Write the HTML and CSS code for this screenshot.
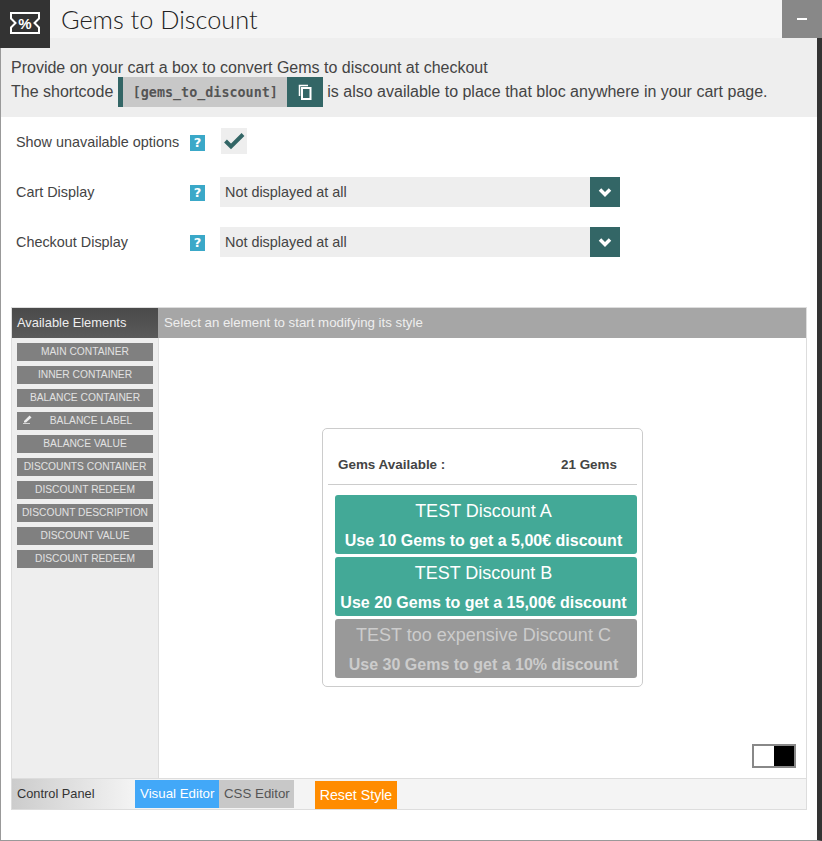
FILE: index.html
```html
<!DOCTYPE html>
<html lang="en">
<head>
<meta charset="utf-8">
<title>Gems to Discount</title>
<link rel="stylesheet" href="styles.css">
</head>
<body>
<header class="topbar">
  <div class="logo">
    <svg width="32" height="24" viewBox="0 0 32 24"><path class="ticket" d="M2 2H30V7.500L25.500 12L30 16.500V22H2V16.500L6.500 12L2 7.500Z"/><text class="pct" x="16" y="17.500">%</text></svg>
  </div>
  <h1 class="title">Gems to Discount</h1>
  <button class="collapse"><span class="minus"></span></button>
</header>
<main class="panel">
  <section class="intro">
    <p class="intro-line">Provide on your cart a box to convert Gems to discount at checkout</p>
    <div class="intro-line shortline">
      <span>The shortcode</span>
      <span class="shortcode"><code class="code">[gems_to_discount]</code><span class="copy"><svg width="16" height="16" viewBox="0 0 16 16"><path class="copy-back" d="M11 1.500H2.500V12"/><rect class="copy-front" x="5" y="4" width="8.500" height="11"/></svg></span></span>
      <span>is also available to place that bloc anywhere in your cart page.</span>
    </div>
  </section>
  <section class="options">
    <div class="opt opt-check">
      <label class="opt-label">Show unavailable options</label>
      <span class="help">?</span>
      <span class="checkbox"><svg width="22" height="18" viewBox="0 0 22 18"><path class="tick" d="M2.500 9L8 14.500L20 2.500"/></svg></span>
    </div>
    <div class="opt">
      <label class="opt-label">Cart Display</label>
      <span class="help">?</span>
      <div class="select"><span class="select-value">Not displayed at all</span><span class="select-btn"><svg width="14" height="10" viewBox="0 0 14 10"><path class="chev" d="M2 2.500L7 7.500L12 2.500"/></svg></span></div>
    </div>
    <div class="opt">
      <label class="opt-label">Checkout Display</label>
      <span class="help">?</span>
      <div class="select"><span class="select-value">Not displayed at all</span><span class="select-btn"><svg width="14" height="10" viewBox="0 0 14 10"><path class="chev" d="M2 2.500L7 7.500L12 2.500"/></svg></span></div>
    </div>
  </section>
  <section class="editor">
    <div class="ed-head">
      <div class="ed-title">Available Elements</div>
      <div class="ed-hint">Select an element to start modifying its style</div>
    </div>
    <div class="ed-body">
      <aside class="side">
        <button class="el">MAIN CONTAINER</button>
        <button class="el">INNER CONTAINER</button>
        <button class="el">BALANCE CONTAINER</button>
        <button class="el el-active"><svg class="pencil" width="11" height="10" viewBox="0 0 11 10"><path d="M1 7L6.500 1.500L8.500 3.500L3 8.500H1ZM0 9.200H7V10H0Z"/></svg>BALANCE LABEL</button>
        <button class="el">BALANCE VALUE</button>
        <button class="el">DISCOUNTS CONTAINER</button>
        <button class="el">DISCOUNT REDEEM</button>
        <button class="el">DISCOUNT DESCRIPTION</button>
        <button class="el">DISCOUNT VALUE</button>
        <button class="el">DISCOUNT REDEEM</button>
      </aside>
      <div class="canvas">
        <div class="widget">
          <div class="balance"><span>Gems Available :</span><span>21 Gems</span></div>
          <div class="discounts">
            <div class="disc"><div class="disc-name">TEST Discount A</div><div class="disc-desc">Use 10 Gems to get a 5,00€ discount</div></div>
            <div class="disc"><div class="disc-name">TEST Discount B</div><div class="disc-desc">Use 20 Gems to get a 15,00€ discount</div></div>
            <div class="disc disc-off"><div class="disc-name">TEST too expensive Discount C</div><div class="disc-desc">Use 30 Gems to get a 10% discount</div></div>
          </div>
        </div>
        <div class="toggle"><span class="t-white"></span><span class="t-black"></span></div>
      </div>
    </div>
    <div class="ed-foot">
      <div class="cp">Control Panel</div>
      <div class="tab tab-on">Visual Editor</div>
      <div class="tab tab-css">CSS Editor</div>
      <button class="reset">Reset Style</button>
    </div>
  </section>
</main>
</body>
</html>
```
FILE: styles.css
```css
* { box-sizing: border-box; }
html, body { margin: 0; padding: 0; }
body {
  width: 822px;
  height: 841px;
  overflow: hidden;
  background: #fff;
  font-family: "Liberation Sans", Arial, sans-serif;
  color: #444;
}
button { font-family: inherit; border: 0; padding: 0; margin: 0; }

.topbar { display: flex; height: 38px; background: #f4f4f4; }
.logo {
  width: 50px; height: 48px; flex: none;
  background: #333; position: relative; z-index: 2;
  display: flex; align-items: center; justify-content: center;
  padding-bottom: 2px;
}
.ticket { fill: none; stroke: #fff; stroke-width: 2; }
.pct { fill: #fff; font: bold 15px "Liberation Sans", sans-serif; text-anchor: middle; }
.title {
  margin: 0 0 0 11px; flex: 1;
  font: 300 25.300px/38px Lato, sans-serif; color: #222;
}
.collapse {
  width: 40px; height: 38px; background: #888;
  display: flex; align-items: center; justify-content: center;
}
.minus { width: 10px; height: 2px; background: #fff; }

.panel {
  height: 803px;
  border-left: 1px solid #999;
  border-right: 5px solid #333;
  border-bottom: 1px solid #999;
}
.intro { height: 79px; background: #eee; padding: 18px 10px 0; font-size: 16px; }
.intro-line { margin: 0; height: 24px; line-height: 23px; }
.shortline { display: flex; align-items: center; gap: 5px; line-height: 24px; }
.shortcode {
  display: flex; height: 30px; width: 205px; flex: none;
  border-left: 5px solid #366;
  background: #c8c8c8;
  margin-right: -1px;
}
.code {
  flex: 1; text-align: center;
  font: 600 13.400px/31px "DejaVu Sans Mono", monospace; color: #555;
}
.copy {
  width: 36px; background: #366;
  display: flex; align-items: center; justify-content: center;
}
.copy-back { fill: none; stroke: #fff; stroke-width: 1.500; }
.copy-front { fill: none; stroke: #fff; stroke-width: 2; }

.options { padding: 11px 0 0 15px; height: 190px; }
.opt { display: flex; align-items: center; height: 30px; margin-bottom: 20px; }
.opt-check { height: 26px; margin-bottom: 23px; }
.opt-label { width: 174px; font-size: 14.400px; flex: none; }
.opt-check .opt-label { margin-top: 2px; }
.help {
  width: 15px; height: 16px; flex: none; background: #3aa8c8; color: #fff;
  font: bold 13px/16px "DejaVu Sans", sans-serif; text-align: center;
  margin-top: 2px;
}
.opt-check .help { margin-top: 4px; }
.checkbox {
  margin-left: 16px; width: 26px; height: 26px; background: #eee;
  display: flex; align-items: center; justify-content: center;
}
.tick { fill: none; stroke: #366; stroke-width: 4; }
.select {
  margin-left: 15px; width: 400px; height: 30px; background: #eee;
  display: flex; font-size: 14.400px; line-height: 30px;
}
.select-value { flex: 1; padding-left: 5px; }
.select-btn {
  width: 30px; background: #366;
  display: flex; align-items: center; justify-content: center;
}
.chev { fill: none; stroke: #fff; stroke-width: 3.500; }

.editor {
  margin-left: 10px; width: 796px; height: 503px;
  border: 1px solid #ddd;
  display: flex; flex-direction: column;
}
.ed-head { display: flex; height: 30px; flex: none; line-height: 29px; }
.ed-title {
  width: 146px; padding-left: 5px; color: #eee; font-size: 12.900px;
  background: linear-gradient(to bottom, #4a4a4a, #5a5a5a);
}
.ed-hint { flex: 1; padding-left: 6px; background: #a6a6a6; color: #eee; font-size: 13.280px; line-height: 29px; }
.ed-body { display: flex; flex: 1; min-height: 0; }
.side {
  width: 147px; flex: none; background: #eee;
  border-right: 1px solid #ddd;
  padding: 5px 5px 0;
  display: flex; flex-direction: column; gap: 5px;
}
.el {
  height: 18px; width: 136px; background: #808080; color: #e2e2e2;
  font-size: 10.240px; line-height: 18px; text-align: center; position: relative;
}
.el-active { padding-left: 12px; }
.pencil { position: absolute; left: 6px; top: 2px; fill: #eee; }
.canvas { flex: 1; position: relative; padding: 90px 0 0 163px; }
.widget {
  width: 321px; height: 259px;
  border: 1px solid #ccc; border-radius: 5px;
  padding: 0 5px;
}
.balance {
  height: 56px; margin-bottom: 10px;
  border-bottom: 1px solid #ccc;
  display: flex; justify-content: space-between;
  padding: 27px 20px 0 10px;
  font-size: 13.440px; line-height: 17px; font-weight: bold; color: #444;
}
.discounts { padding-left: 7px; display: flex; flex-direction: column; gap: 3px; }
.disc {
  height: 59px; background: #43a997; border-radius: 3px; color: #fff;
  text-align: center; padding-right: 5px;
}
.disc-name { font-size: 18px; line-height: 20px; padding-top: 6px; height: 30px; }
.disc-desc { font-size: 16px; font-weight: bold; line-height: 20px; padding-top: 6px; white-space: nowrap; }
.disc-off { background: #999; color: #ccc; }
.toggle {
  position: absolute; right: 10px; bottom: 10px;
  width: 44px; height: 24px; border: 2px solid #888; display: flex;
}
.t-white { flex: 1; background: #fff; }
.t-black { flex: 1; background: #000; }

.ed-foot {
  height: 31px; flex: none; background: #f4f4f4;
  border-top: 1px solid #ddd;
  display: flex; align-items: flex-start;
}
.cp {
  width: 123px; height: 30px; padding-left: 5px; line-height: 30px; font-size: 12.800px; color: #333;
  background: linear-gradient(to right, #ccc, #f4f4f4);
}
.tab {
  width: 84px; height: 28px; margin-top: 1px; padding: 0 5px; line-height: 27px; font-size: 13.300px;
  background: #c8c8c8; color: #555; white-space: nowrap;
}
.tab-css { width: 75px; }
.tab-on { background: #42a8f8; color: #fff; }
.reset {
  margin: 2px 0 0 21px; height: 28px; width: 82px;
  background: #ff8c00; color: #fff; font-size: 14.200px; line-height: 28px;
}
```
